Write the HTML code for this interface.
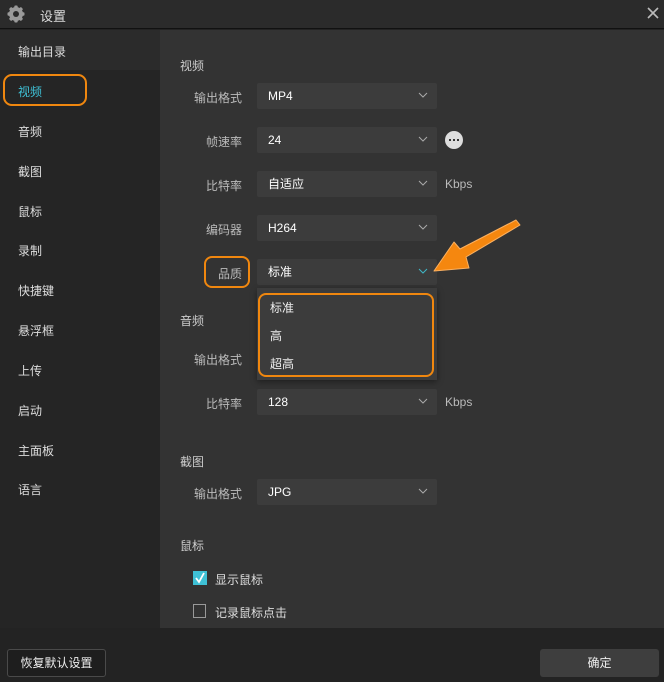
<!DOCTYPE html>
<html><head><meta charset="utf-8"><style>
*{margin:0;padding:0;box-sizing:border-box}
body{width:664px;height:682px;background:#232323;font-family:"Liberation Sans","Noto Sans CJK SC",sans-serif;font-size:12px;color:#ddd;position:relative;overflow:hidden}
.title{position:absolute;left:0;top:0;width:664px;height:29px;background:#2b2b2b;border-bottom:1px solid #111}
.abs{position:absolute}
.side{position:absolute;left:0;top:30px;width:160px;height:598px;background:#252525}
.side div{position:absolute;left:18px;font-size:12px;color:#ddd}
.content{position:absolute;left:160px;top:30px;width:504px;height:598px;background:#333}
.lbl{position:absolute;width:82px;text-align:right;color:#bbb;font-size:12px;left:160px}
.sec{position:absolute;left:180px;color:#ccc;font-size:12px}
.sel{position:absolute;left:257px;width:180px;height:26px;background:#3c3c3c;border-radius:2px;color:#fff;font-size:12px;padding-left:11px;line-height:26px}
.sel svg{position:absolute;right:9px;top:9px}
.unit{position:absolute;left:445px;color:#bbb;font-size:12px}
.btn{position:absolute;border-radius:3px}
</style></head><body>
<div class="title"></div>
<svg class="abs" style="left:7px;top:5px" width="18" height="18" viewBox="0 0 18 18"><g fill="#9a9a9a"><circle cx="9" cy="9" r="7"/><rect x="7.3" y="0.5" width="3.4" height="17" rx="1"/><rect x="0.5" y="7.3" width="17" height="3.4" rx="1"/><rect x="7.3" y="0.5" width="3.4" height="17" rx="1" transform="rotate(45 9 9)"/><rect x="7.3" y="0.5" width="3.4" height="17" rx="1" transform="rotate(-45 9 9)"/></g><circle cx="9" cy="9" r="3" fill="#2b2b2b"/></svg>
<div class="abs" style="left:40px;top:6px;font-size:13px;color:#ddd">设置</div>
<svg class="abs" style="left:647px;top:7px" width="12" height="12"><path d="M1 1L11 11M11 1L1 11" stroke="#bbb" stroke-width="1.6"/></svg>
<div class="side">
<div style="left:0;top:0;width:160px;height:40px;background:#2b2b2b"></div>
<div style="top:13px">输出目录</div>
<div style="left:3px;top:44px;width:84px;height:32px;border:2px solid #f0870f;border-radius:9px"></div>
<div style="top:53px;color:#3fc1d6">视频</div>
<div style="top:93px">音频</div>
<div style="top:133px">截图</div>
<div style="top:173px">鼠标</div>
<div style="top:212px">录制</div>
<div style="top:252px">快捷键</div>
<div style="top:292px">悬浮框</div>
<div style="top:332px">上传</div>
<div style="top:372px">启动</div>
<div style="top:412px">主面板</div>
<div style="top:451px">语言</div>
</div>
<div class="content"></div>
<div class="sec" style="top:57px">视频</div>
<div class="lbl" style="top:89px">输出格式</div>
<div class="sel" style="top:83px">MP4<svg width="10" height="7"><path d="M1 1L5 5L9 1" stroke="#aaa" fill="none"/></svg></div>
<div class="lbl" style="top:133px">帧速率</div>
<div class="sel" style="top:127px">24<svg width="10" height="7"><path d="M1 1L5 5L9 1" stroke="#aaa" fill="none"/></svg></div>
<div class="abs" style="left:445px;top:131px;width:18px;height:18px;border-radius:50%;background:#ddd"></div>
<div class="abs" style="left:449px;top:139px;width:2px;height:2px;background:#333;box-shadow:4px 0 #333,8px 0 #333"></div>
<div class="lbl" style="top:177px">比特率</div>
<div class="sel" style="top:171px">自适应<svg width="10" height="7"><path d="M1 1L5 5L9 1" stroke="#aaa" fill="none"/></svg></div>
<div class="unit" style="top:177px">Kbps</div>
<div class="lbl" style="top:221px">编码器</div>
<div class="sel" style="top:215px">H264<svg width="10" height="7"><path d="M1 1L5 5L9 1" stroke="#aaa" fill="none"/></svg></div>
<div class="abs" style="left:204px;top:256px;width:46px;height:32px;border:2px solid #f0870f;border-radius:8px"></div>
<div class="lbl" style="top:265px">品质</div>
<div class="sel" style="top:259px">标准<svg width="10" height="7"><path d="M1 1L5 5L9 1" stroke="#3fb6c6" fill="none"/></svg></div>
<div class="sec" style="top:312px">音频</div>
<div class="lbl" style="top:351px">输出格式</div>
<div class="lbl" style="top:395px">比特率</div>
<div class="sel" style="top:389px">128<svg width="10" height="7"><path d="M1 1L5 5L9 1" stroke="#aaa" fill="none"/></svg></div>
<div class="unit" style="top:395px">Kbps</div>
<div class="abs" style="left:257px;top:288px;width:180px;height:92px;background:#3c3c3c;box-shadow:0 2px 6px rgba(0,0,0,.4)"></div>
<div class="abs" style="left:258px;top:293px;width:176px;height:84px;border:2.5px solid #f0870f;border-radius:8px"></div>
<div class="abs" style="left:270px;top:299px;color:#eee">标准</div>
<div class="abs" style="left:270px;top:327px;color:#eee">高</div>
<div class="abs" style="left:270px;top:355px;color:#eee">超高</div>
<div class="sec" style="top:453px">截图</div>
<div class="lbl" style="top:485px">输出格式</div>
<div class="sel" style="top:479px">JPG<svg width="10" height="7"><path d="M1 1L5 5L9 1" stroke="#aaa" fill="none"/></svg></div>
<div class="sec" style="top:537px">鼠标</div>
<div class="abs" style="left:193px;top:571px;width:14px;height:14px;background:#3fc1d6"></div>
<svg class="abs" style="left:193px;top:571px" width="14" height="14"><path d="M3 7L6 11L11 2" stroke="#fff" stroke-width="1.8" fill="none"/></svg>
<div class="abs" style="left:215px;top:571px;color:#ddd">显示鼠标</div>
<div class="abs" style="left:193px;top:604px;width:13px;height:14px;border:1px solid #999"></div>
<div class="abs" style="left:215px;top:604px;color:#ddd">记录鼠标点击</div>
<svg class="abs" style="left:0;top:0" width="664" height="682" viewBox="0 0 664 682"><path d="M516 220L520 225L466 257L469 268L434 271L454 242L460 249Z" fill="#f5870f" stroke="#fbb060" stroke-width="1" stroke-linejoin="round"/></svg>
<div class="btn" style="left:7px;top:649px;width:99px;height:28px;border:1px solid #4a4a4a;background:#1e1e1e;color:#eee;text-align:center;line-height:26px;font-size:12px">恢复默认设置</div>
<div class="btn" style="left:540px;top:649px;width:119px;height:28px;background:#3e3e3e;color:#eee;text-align:center;line-height:28px;font-size:12px">确定</div>
</body></html>
